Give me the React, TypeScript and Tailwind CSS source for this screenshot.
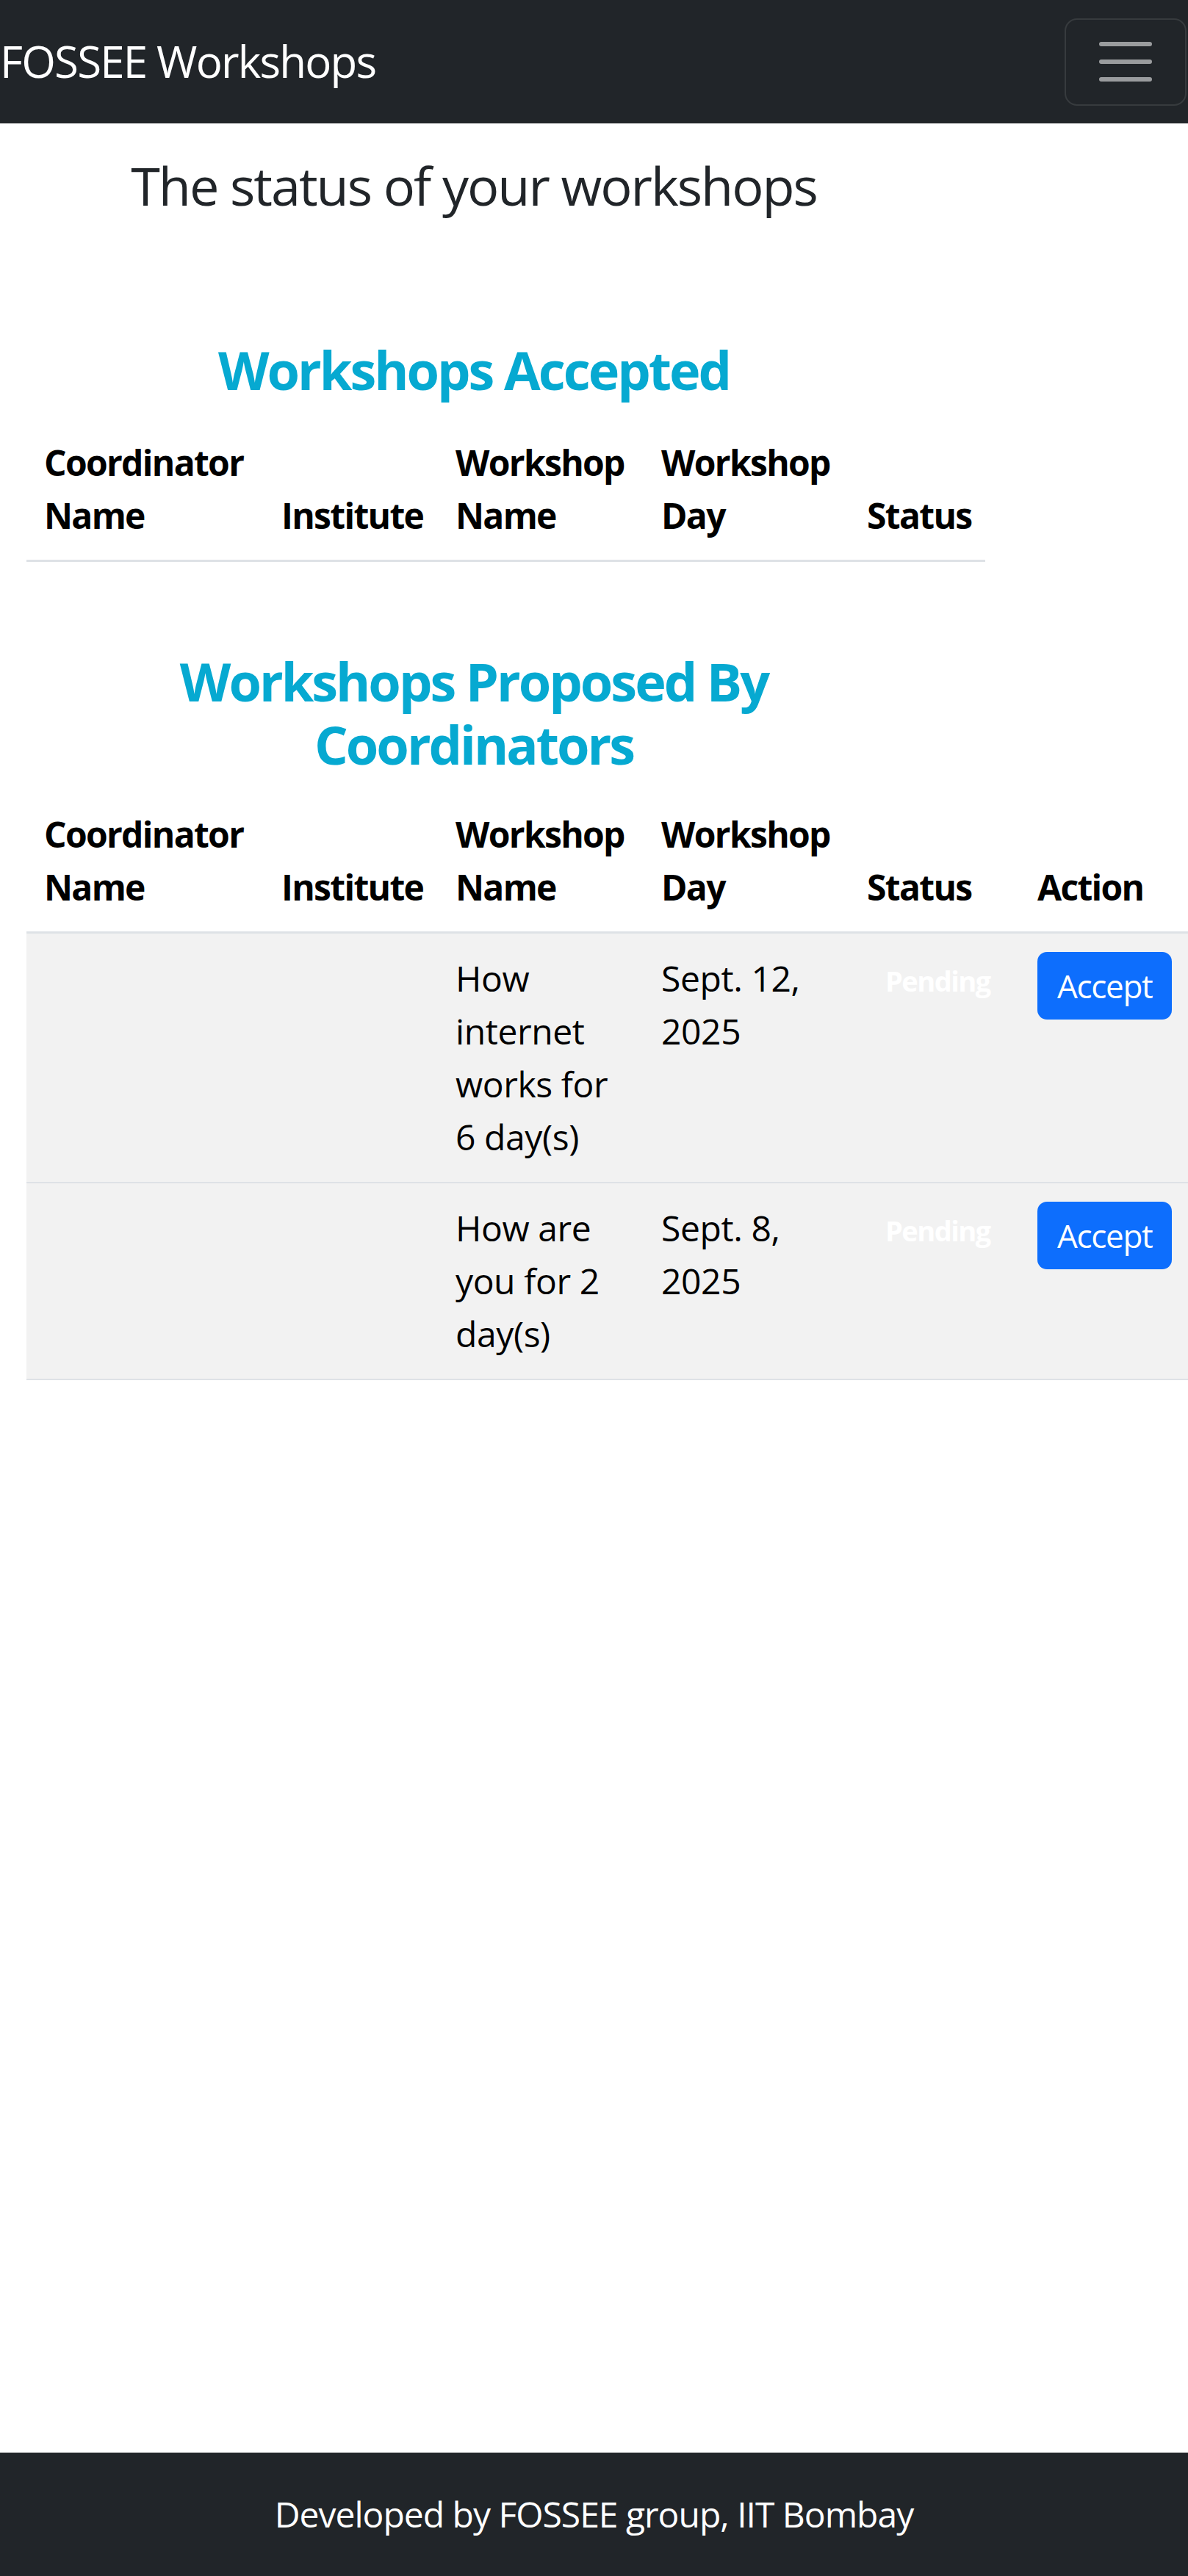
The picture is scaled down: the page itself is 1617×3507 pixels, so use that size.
import React from "react";

type Row = { name: string; date: string };

const rows: Row[] = [
  { name: "How internet works for 6 day(s)", date: "Sept. 12, 2025" },
  { name: "How are you for 2 day(s)", date: "Sept. 8, 2025" },
];

function HeadCell({ children, w }: { children?: React.ReactNode; w: string }) {
  return (
    <th className={`${w} px-[24px] py-[24px] text-left align-bottom font-bold tracking-[-0.035em]`}>
      {children}
    </th>
  );
}

export default function App() {
  return (
    <div className="min-h-screen w-full overflow-hidden flex flex-col bg-white tracking-[-0.025em] [font-family:'Open_Sans','Noto_Sans',sans-serif]">
      <nav className="h-[168px] shrink-0 bg-[#212529] flex items-center justify-between">
        <a className="text-[60px] leading-[1.362] text-white whitespace-nowrap tracking-[-0.03em]">
          FOSSEE Workshops
        </a>
        <button className="mr-[2px] w-[166px] h-[119px] rounded-[17px] border-2 border-[#373b3e] flex items-center justify-center">
          <svg width="90" height="90" viewBox="0 0 30 30" fill="none">
            <path
              d="M4 7h22M4 15h22M4 23h22"
              stroke="rgba(255,255,255,0.55)"
              strokeWidth="2"
              strokeLinecap="round"
            />
          </svg>
        </button>
      </nav>

      <main className="flex-1">
        <div className="w-[1290px] px-[27px] text-center">
          <h2 className="mt-[41px] text-[72px] leading-[1.2] font-medium text-[#212529] tracking-[-0.028em]">
            The status of your workshops
          </h2>
          <h2 className="mt-[165px] text-[72px] leading-[1.2] font-bold text-[#06a9d1] tracking-[-0.042em]">
            Workshops Accepted
          </h2>
        </div>

        <table className="ml-[36px] mt-[23px] table-fixed border-collapse w-[1305px] text-black text-[48px] leading-[72px]">
          <thead>
            <tr className="border-b-[3px] border-[#dee2e6]">
              <HeadCell w="w-[323px]">Coordinator Name</HeadCell>
              <HeadCell w="w-[237px]">Institute</HeadCell>
              <HeadCell w="w-[280px]">Workshop Name</HeadCell>
              <HeadCell w="w-[280px]">Workshop Day</HeadCell>
              <HeadCell w="w-[185px]">Status</HeadCell>
            </tr>
          </thead>
          <tbody></tbody>
        </table>

        <div className="w-[1290px] px-[27px] text-center">
          <h2 className="mt-[119px] text-[72px] leading-[1.2] font-bold text-[#06a9d1] tracking-[-0.042em]">
            Workshops Proposed By Coordinators
          </h2>
        </div>

        <table className="ml-[36px] mt-[19px] table-fixed border-collapse w-[1584px] text-black text-[48px] leading-[72px]">
          <thead>
            <tr className="border-b-[3px] border-[#dee2e6]">
              <HeadCell w="w-[323px]">Coordinator Name</HeadCell>
              <HeadCell w="w-[237px]">Institute</HeadCell>
              <HeadCell w="w-[280px]">Workshop Name</HeadCell>
              <HeadCell w="w-[280px]">Workshop Day</HeadCell>
              <HeadCell w="w-[232px]">Status</HeadCell>
              <HeadCell w="w-[232px]">Action</HeadCell>
            </tr>
          </thead>
          <tbody>
            {rows.map((r) => (
              <tr key={r.name} className="bg-[#f2f2f2] border-b-2 border-[#dee2e6]">
                <td className="px-[24px] py-[25px] align-top"></td>
                <td className="px-[24px] py-[25px] align-top"></td>
                <td className="px-[24px] py-[25px] align-top">{r.name}</td>
                <td className="px-[24px] py-[25px] align-top">{r.date}</td>
                <td className="px-[24px] py-[25px] align-top">
                  <span className="inline-block px-[25px] py-[13px] text-[38px] leading-none font-bold text-white tracking-[-0.04em]">
                    Pending
                  </span>
                </td>
                <td className="px-[24px] py-[25px] align-top">
                  <button className="align-top bg-[#0d6efd] text-white text-[44px] leading-[66px] px-[27px] py-[13px] rounded-[13px] tracking-[-0.03em]">
                    Accept
                  </button>
                </td>
              </tr>
            ))}
          </tbody>
        </table>
      </main>

      <footer className="h-[168px] shrink-0 bg-[#212529] flex items-center justify-center text-white text-[48px] tracking-[-0.021em]">
        Developed by FOSSEE group, IIT Bombay
      </footer>
    </div>
  );
}
